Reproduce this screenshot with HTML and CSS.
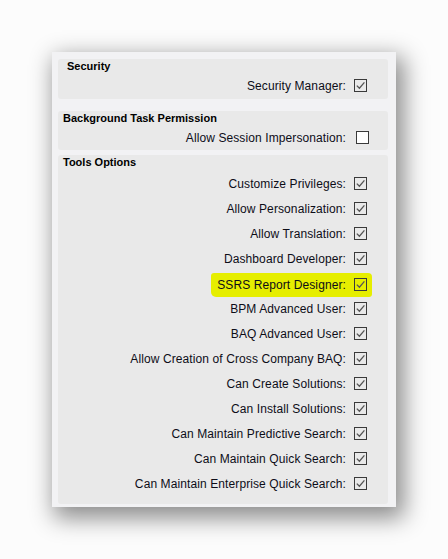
FILE: index.html
```html
<!DOCTYPE html><html><head>
  <meta http-equiv="Content-Type" content="text/html; charset=UTF-8">
  <title>Security Options</title>
  <link rel="stylesheet" href="styles.css">
</head><body>

<div class="panel">

  <div class="group grp-security">
    <div class="title title-indent">Security</div>
    <div class="row"><span>Security Manager:</span><i class="cb on"></i></div>
  </div>

  <div class="group grp-bg">
    <div class="title">Background Task Permission</div>
    <div class="row"><span>Allow Session Impersonation:</span><i class="cb off"></i></div>
  </div>

  <div class="group grp-tools">
    <div class="title">Tools Options</div>
    <div class="rows">
      <div class="row"><span>Customize Privileges:</span><i class="cb on"></i></div>
      <div class="row"><span>Allow Personalization:</span><i class="cb on"></i></div>
      <div class="row"><span>Allow Translation:</span><i class="cb on"></i></div>
      <div class="row"><span>Dashboard Developer:</span><i class="cb on"></i></div>
      <div class="row"><span class="hl"><span>SSRS Report Designer:</span><i class="cb on"></i></span></div>
      <div class="row"><span>BPM Advanced User:</span><i class="cb on"></i></div>
      <div class="row"><span>BAQ Advanced User:</span><i class="cb on"></i></div>
      <div class="row"><span>Allow Creation of Cross Company BAQ:</span><i class="cb on"></i></div>
      <div class="row"><span>Can Create Solutions:</span><i class="cb on"></i></div>
      <div class="row"><span>Can Install Solutions:</span><i class="cb on"></i></div>
      <div class="row"><span>Can Maintain Predictive Search:</span><i class="cb on"></i></div>
      <div class="row"><span>Can Maintain Quick Search:</span><i class="cb on"></i></div>
      <div class="row"><span>Can Maintain Enterprise Quick Search:</span><i class="cb on"></i></div>
    </div>
  </div>

</div>

<script>
// draw the tick into every checked box
var ticks = document.querySelectorAll('.cb.on'), i;
for (i = 0; i < ticks.length; i += 1) {
  ticks[i].innerHTML = '<svg width="11" height="11" viewBox="0 0 11 11">' +
    '<polyline points="1.8,5.6 4.4,8.2 9.4,2.4" fill="none" stroke="#555" ' +
    'stroke-width="1.3"/></svg>';
}
</script>

</body></html>
```

FILE: styles.css
```css
body { margin: 0; background: #fcfcfc; height: 559px; overflow: hidden;
  font-family: "Liberation Sans", Arial, sans-serif; }

.panel { margin: 52px 0 0 52px; width: 344px; height: 455px;
  box-sizing: border-box; padding: 7px 8px 0 6px;
  background: #f2f2f4;
  box-shadow: 5px 8px 22px 3px rgba(0, 0, 0, 0.45);
}

.group { background: #e9e9e9; border-radius: 3px; }
.grp-security { height: 40px; margin-bottom: 12px; }
.grp-bg { height: 39px; margin-bottom: 5px; }
.grp-tools { height: 349px; }

.title { font-weight: bold; font-size: 11px; line-height: 14px;
  color: #000; padding-left: 5px; }
.title-indent { padding-left: 9px; }

.rows { padding-top: 2px; }
.row { display: flex; justify-content: flex-end; align-items: center;
  height: 25px; gap: 8px; padding-right: 21px;
  font-size: 12px; letter-spacing: 0.1px; color: #0d0d18; }

.cb { display: block; width: 11px; height: 11px; flex: none;
  border: 1px solid #3a3a3a; }
.cb svg { display: block; }
.cb.off { background: #fff; margin-left: 2px; margin-right: -2px; }

.hl { display: flex; align-items: center; gap: 8px;
  height: 24px; margin: 2px -5px 0 0; padding: 0 5px 0 6px;
  background: #e6ee00; border-radius: 3px 4px 3px 5px; }
```
